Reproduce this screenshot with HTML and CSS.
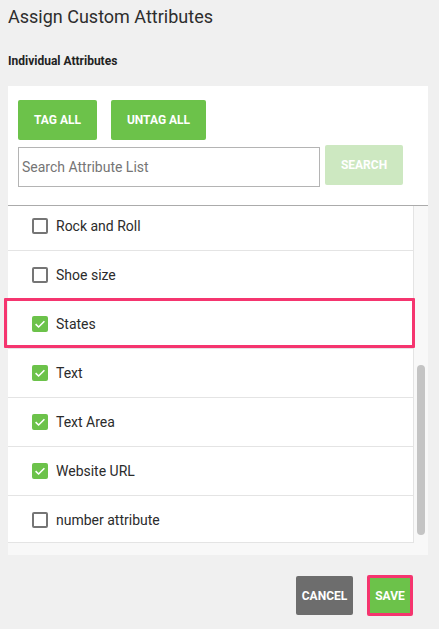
FILE: index.html
```html
<!DOCTYPE html>
<html>
<head>
<meta charset="utf-8">
<link rel="stylesheet" href="styles.css">
</head>
<body>
<h1 class="title">Assign Custom Attributes</h1>
<div class="section-label">Individual Attributes</div>
<div class="panel">
  <div class="actions">
    <button class="btn btn-green">TAG ALL</button>
    <button class="btn btn-green">UNTAG ALL</button>
  </div>
  <div class="search-row">
    <input class="search-input" type="text" placeholder="Search Attribute List">
    <button class="btn btn-search">SEARCH</button>
  </div>
  <div class="list-wrap">
    <div class="viewport">
      <ul class="items">
        <li class="item"><span class="cb"></span><span class="label">Rock and Roll</span></li>
        <li class="item"><span class="cb"></span><span class="label">Shoe size</span></li>
        <li class="item"><span class="cb checked"><svg viewBox="0 0 16 16" width="16" height="16"><path d="M3.6 8.2 L6.6 11 L12.4 5.2" fill="none" stroke="#fff" stroke-width="1.6"/></svg></span><span class="label">States</span></li>
        <li class="item"><span class="cb checked"><svg viewBox="0 0 16 16" width="16" height="16"><path d="M3.6 8.2 L6.6 11 L12.4 5.2" fill="none" stroke="#fff" stroke-width="1.6"/></svg></span><span class="label">Text</span></li>
        <li class="item"><span class="cb checked"><svg viewBox="0 0 16 16" width="16" height="16"><path d="M3.6 8.2 L6.6 11 L12.4 5.2" fill="none" stroke="#fff" stroke-width="1.6"/></svg></span><span class="label">Text Area</span></li>
        <li class="item"><span class="cb checked"><svg viewBox="0 0 16 16" width="16" height="16"><path d="M3.6 8.2 L6.6 11 L12.4 5.2" fill="none" stroke="#fff" stroke-width="1.6"/></svg></span><span class="label">Website URL</span></li>
        <li class="item"><span class="cb"></span><span class="label">number attribute</span></li>
      </ul>
    </div>
    <div class="track"><div class="thumb"></div></div>
    <div class="highlight"></div>
  </div>
</div>
<div class="footer">
  <button class="btn btn-cancel">CANCEL</button>
  <button class="btn btn-save">SAVE</button>
</div>
</body>
</html>
```
FILE: styles.css
```css
* { box-sizing: border-box; }
html, body { margin: 0; padding: 0; }
body {
  background: #f0f0f0;
  font-family: Roboto, "Liberation Sans", Arial, sans-serif;
  color: #2b2b2b;
  width: 439px;
  height: 629px;
  overflow: hidden;
}
.title {
  margin: 0;
  padding: 5px 8px 0;
  font-size: 18px;
  line-height: 24px;
  font-weight: 400;
  color: #2d2d2d;
}
.section-label {
  margin-top: 24px;
  padding: 0 8px;
  font-size: 12px;
  line-height: 16px;
  font-weight: 700;
  color: #222;
}
.panel {
  margin: 17px 11px 0 8px;
  background: #fff;
}
.actions {
  display: flex;
  gap: 14px;
  padding: 14px 10px 0;
}
.btn {
  border: none;
  font-family: Roboto, "Liberation Sans", Arial, sans-serif;
  font-weight: 700;
  font-size: 12px;
  color: #fff;
  border-radius: 2px;
  padding: 0;
  cursor: pointer;
}
.btn-green {
  background: #6cc24a;
  height: 40px;
}
.actions .btn-green:first-child { width: 79px; }
.actions .btn-green:last-child { width: 95px; }
.search-row {
  display: flex;
  align-items: flex-start;
  gap: 5px;
  padding: 5px 10px 0;
  height: 65px;
}
.search-input {
  margin-top: 2px;
  width: 302px;
  height: 40px;
  border: 1px solid #b4b4b4;
  border-radius: 0;
  padding: 0 3px;
  font-family: Roboto, "Liberation Sans", Arial, sans-serif;
  font-size: 14px;
  color: #333;
  outline: none;
}
.search-input::placeholder { color: #757575; }
.btn-search {
  width: 78px;
  height: 40px;
  background: #cde8c1;
}
.list-wrap {
  display: flex;
  background: #f8f8f8;
  border-top: 1px solid #ababab;
  height: 350px;
  position: relative;
}
.viewport {
  width: 406px;
  height: 337px;
  background: #fff;
  border-right: 1px solid #e4e4e4;
  border-bottom: 1px solid #e4e4e4;
  overflow: hidden;
}
.items {
  list-style: none;
  margin: -4px 0 0;
  padding: 0;
}
.item {
  display: flex;
  align-items: center;
  gap: 8px;
  height: 49px;
  padding-left: 24px;
  border-bottom: 1px solid #e4e4e4;
  font-size: 14px;
  color: #2b2b2b;
}
.cb {
  width: 16px;
  height: 16px;
  border: 2px solid #757575;
  border-radius: 2px;
  flex: none;
  display: flex;
}
.cb.checked {
  border: none;
  background: #6cc24a;
}
.cb svg { display: block; }
.track {
  flex: 1;
  padding-left: 3px;
}
.thumb {
  margin-top: 159px;
  width: 8px;
  height: 170px;
  border-radius: 4px;
  background: #c4c4c4;
}
.highlight {
  position: absolute;
  left: -4px;
  top: 92px;
  width: 411px;
  height: 50px;
  border: 3px solid #f5356f;
  border-radius: 1px;
  pointer-events: none;
}
.footer {
  display: flex;
  justify-content: flex-end;
  align-items: center;
  gap: 14px;
  padding: 20px 26px 0 0;
}
.btn-cancel {
  width: 57px;
  height: 39px;
  background: #6d6d6d;
}
.btn-save {
  width: 46px;
  height: 41px;
  background: #6cc24a;
  border: 3px solid #f5356f;
  border-radius: 2px;
}
```
